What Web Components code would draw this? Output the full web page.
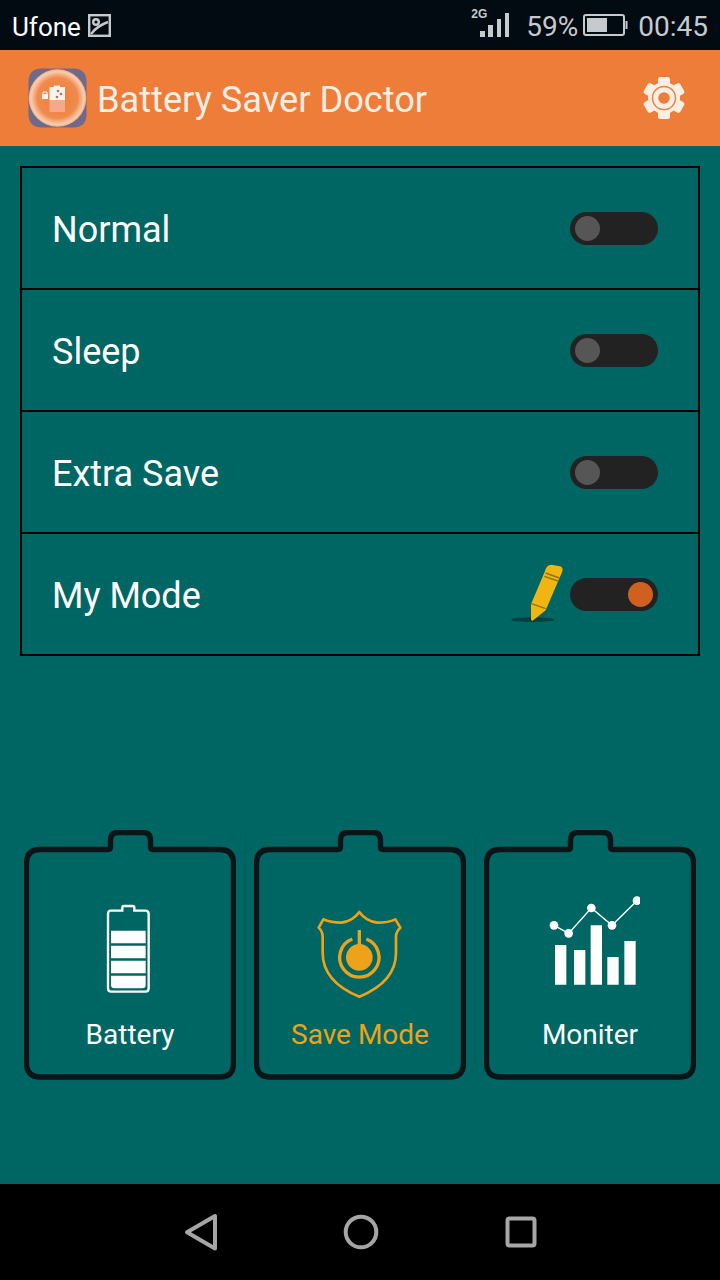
<!DOCTYPE html>
<html>
<head>
<meta charset="utf-8">
<title>Battery Saver Doctor</title>
<style>
  html, body { margin: 0; padding: 0; }
  body { width: 720px; height: 1280px; overflow: hidden; font-family: Roboto, "Liberation Sans", sans-serif; background: #006663; }
  #page { display: flex; flex-direction: column; height: 1280px; }
  main-area { flex: 1; }
</style>
</head>
<body>
<div id="page">
  <status-bar></status-bar>
  <app-bar></app-bar>
  <main-area>
    <mode-list>
      <mode-row label="Normal"></mode-row>
      <mode-row label="Sleep"></mode-row>
      <mode-row label="Extra Save"></mode-row>
      <mode-row label="My Mode" on>
        <svg slot="extra" width="57" height="62" viewBox="90 95 171 186">
          <ellipse cx="158" cy="268" rx="64" ry="7" fill="#013f40"/>
          <path d="M153 222 L195 122 Q200 103 214 103 L240 108 Q252 112 246 126 L197 240 L158 271 Q153 272 153 265 Z" fill="#f1b512"/>
          <path d="M154 220 L197 235 M197 128 L238 143 M193 138 L234 152" stroke="#8f7512" stroke-width="4" fill="none"/>
        </svg>
      </mode-row>
    </mode-list>
    <card-row>
      <tool-card>
        <svg slot="icon" viewBox="210 219 300 321">
          <path d="M302 272 H337 V263 Q337 258 342 258 H368 Q373 258 373 263 V272 H406 Q416 272 416 282 V505 Q416 515 406 515 H304 Q294 515 294 505 V282 Q294 272 302 272 Z" fill="none" stroke="#fff" stroke-width="7"/>
          <path d="M303 332 H407 V370 H303 Z M303 377 H407 V415 H303 Z M303 422 H407 V460 H303 Z M303 467 H407 V495 Q407 505 397 505 H313 Q303 505 303 495 Z" fill="#fff"/>
        </svg>
        Battery
      </tool-card>
      <tool-card active>
        <svg slot="icon" viewBox="210 219 300 321">
          <path d="M358 276 Q378 304 412 308 Q445 308 466 298 L481 323 Q468 335 468 350 V398 Q468 485 358 530 Q248 485 248 398 V350 Q248 335 236 323 L250 298 Q272 308 304 308 Q338 304 358 276 Z" fill="none" stroke="#eda21a" stroke-width="8" stroke-linejoin="round"/>
          <path d="M337 357 A59 59 0 1 0 379 357" fill="none" stroke="#eda21a" stroke-width="10"/>
          <circle cx="358" cy="412" r="40" fill="#eda21a"/>
          <rect x="353" y="330" width="10" height="50" fill="#eda21a"/>
        </svg>
        Save Mode
      </tool-card>
      <tool-card>
        <svg slot="icon" viewBox="210 219 300 321">
          <path d="M255 375 H289 V494 H255 Z M312 390 H346 V494 H312 Z M362 316 H396 V494 H362 Z M412 411 H446 V494 H412 Z M463 363 H497 V494 H463 Z" fill="#fff"/>
          <path d="M252 316 L296 340 L364 264 L426 316 L501 242" fill="none" stroke="#fff" stroke-width="4"/>
          <circle cx="252" cy="316" r="13" fill="#fff"/>
          <circle cx="296" cy="340" r="13" fill="#fff"/>
          <circle cx="364" cy="264" r="13" fill="#fff"/>
          <circle cx="426" cy="316" r="13" fill="#fff"/>
          <circle cx="501" cy="242" r="13" fill="#fff"/>
        </svg>
        Moniter
      </tool-card>
    </card-row>
  </main-area>
  <nav-bar></nav-bar>
</div>

<script>
// top phone status bar
class StatusBar extends HTMLElement {
  constructor() {
    super();
    this.attachShadow({ mode: "open" });
    this.shadowRoot.innerHTML = `
      <style>
        :host { display: flex; align-items: center; height: 50px; background: #020a12; color: #c5cace; font-size: 28px; padding: 0 12px; box-sizing: border-box; }
        .txt { padding-top: 3px; }
        .carrier { color: #fff; font-size: 26px; }
        .pic { margin-left: 7px; }
        .spacer { flex: 1; }
        .signal { position: relative; width: 40px; height: 50px; margin-right: 15px; }
        .signal b { position: absolute; left: 0; top: 7px; font: bold 12px "Liberation Sans", sans-serif; }
        .signal svg { position: absolute; left: 0; top: 0; }
        .batt { margin: 0 10px 0 5px; }
      </style>
      <span class="txt carrier">Ufone</span>
      <svg class="pic" width="23" height="23" viewBox="0 0 23 23" fill="none" stroke="#c5cace" stroke-width="2.4">
        <rect x="1.2" y="1.2" width="20.6" height="20.6"/>
        <circle cx="8" cy="8" r="2.8"/>
        <path d="M3 20 Q9 12 20 8"/>
      </svg>
      <span class="spacer"></span>
      <span class="signal">
        <b>2G</b>
        <svg width="40" height="50" fill="#c5cace"><path d="M9 31 h5 v6 h-5 z M17 25 h5 v12 h-5 z M26 19 h4 v18 h-4 z M34 13 h4 v24 h-4 z"/></svg>
      </span>
      <span class="txt">59%</span>
      <svg class="batt" width="45" height="24" viewBox="0 0 45 24" fill="none">
        <rect x="1" y="2" width="40" height="20" rx="2" stroke="#c5cace" stroke-width="2"/>
        <rect x="4" y="5" width="20" height="14" fill="#c5cace"/>
        <path d="M42.5 8 h2 v8 h-2 z" fill="#c5cace"/>
      </svg>
      <span class="txt">00:45</span>
    `;
  }
}

// orange toolbar with app logo and settings gear
class AppBar extends HTMLElement {
  constructor() {
    super();
    this.attachShadow({ mode: "open" });
    const teeth = [0, 60, 120, 180, 240, 300]
      .map((a) => `<rect x="-6" y="-21" width="12" height="10" rx="2.5" transform="rotate(${a})"/>`)
      .join("");
    this.shadowRoot.innerHTML = `
      <style>
        :host { display: flex; align-items: center; height: 96px; background: #ee7d3a; color: #fdeee4; padding: 0 34px 0 28px; box-sizing: border-box; font-size: 36.2px; }
        .title { flex: 1; margin-left: 10px; padding-top: 2px; }
      </style>
      <svg width="59" height="60" viewBox="0 0 59 60">
        <defs>
          <radialGradient id="glow" cx="50%" cy="50%" r="50%">
            <stop offset="0" stop-color="#ee7d3a"/>
            <stop offset=".7" stop-color="#f08a4c"/>
            <stop offset=".92" stop-color="#f9cdb0"/>
            <stop offset="1" stop-color="#f4ad84"/>
          </radialGradient>
        </defs>
        <path d="M14 0.5 H45 Q58.5 0.5 58.5 14 V46 Q58.5 59.5 45 59.5 H14 Q0.5 59.5 0.5 46 V14 Q0.5 0.5 14 0.5 Z" fill="#6f6a8c"/>
        <circle cx="29.5" cy="30" r="28.8" fill="url(#glow)"/>
        <rect x="21.5" y="19" width="15.5" height="13" fill="#fdf3ec"/>
        <rect x="26" y="17.5" width="6" height="2" fill="#fdf3ec"/>
        <rect x="21.5" y="32" width="15.5" height="12" fill="#f6a98a"/>
        <circle cx="30" cy="23" r="1.3" fill="#c26a6a"/><circle cx="33" cy="26" r="1.3" fill="#c26a6a"/><circle cx="29" cy="29" r="1.3" fill="#c26a6a"/>
        <rect x="14" y="26" width="6" height="5" fill="#fdf3ec"/>
        <path d="M15 26 v-2 h4 v2" stroke="#fdf3ec" fill="none"/>
      </svg>
      <span class="title">Battery Saver Doctor</span>
      <svg width="44" height="46" viewBox="-22 -23 44 46">
        <g fill="#fdeee4">${teeth}<circle r="16"/></g>
        <circle r="11.5" fill="none" stroke="#ee7d3a" stroke-width="1.4"/>
        <circle r="5.8" fill="#ee7d3a"/>
      </svg>
    `;
  }
}

class MainArea extends HTMLElement {
  constructor() {
    super();
    this.attachShadow({ mode: "open" });
    this.shadowRoot.innerHTML = `
      <style>:host { display: block; background: #006663; padding: 20px 20px 0; box-sizing: border-box; }</style>
      <slot></slot>
    `;
  }
}

class ModeList extends HTMLElement {
  constructor() {
    super();
    this.attachShadow({ mode: "open" });
    this.shadowRoot.innerHTML = `
      <style>:host { display: block; border: 2px solid #000; }</style>
      <slot></slot>
    `;
  }
}

class ToggleSwitch extends HTMLElement {
  constructor() {
    super();
    this.attachShadow({ mode: "open" });
    this.shadowRoot.innerHTML = `
      <style>
        :host { display: flex; align-items: center; box-sizing: border-box; width: 88px; height: 33px; padding: 0 5.5px 0 5px; border-radius: 17px; background: #222; }
        :host([on]) { justify-content: flex-end; }
        i { width: 25px; height: 25px; border-radius: 50%; background: #565656; }
        :host([on]) i { background: #d0601f; }
      </style>
      <i></i>
    `;
  }
}

class ModeRow extends HTMLElement {
  constructor() {
    super();
    this.attachShadow({ mode: "open" });
    const label = this.getAttribute("label");
    const on = this.hasAttribute("on") ? "on" : "";
    this.shadowRoot.innerHTML = `
      <style>
        :host { display: flex; align-items: center; height: 122px; box-sizing: border-box; border-bottom: 2px solid #000; padding: 0 40px 0 30px; color: #fff; font-size: 36px; }
        :host(:last-child) { height: 120px; border-bottom: 0; }
        .label { flex: 1; padding-top: 4px; }
        ::slotted(svg) { display: block; margin: 0 3px 3px 0; }
      </style>
      <span class="label">${label}</span>
      <slot name="extra"></slot>
      <toggle-switch ${on}></toggle-switch>
    `;
  }
}

class CardRow extends HTMLElement {
  constructor() {
    super();
    this.attachShadow({ mode: "open" });
    this.shadowRoot.innerHTML = `
      <style>:host { display: grid; grid-template-columns: repeat(3, 212px); column-gap: 18px; margin: 174px 0 0 4px; }</style>
      <slot></slot>
    `;
  }
}

// battery shaped tile: outline sits behind the icon and label
class ToolCard extends HTMLElement {
  constructor() {
    super();
    this.attachShadow({ mode: "open" });
    this.shadowRoot.innerHTML = `
      <style>
        :host { display: flex; flex-direction: column; align-items: center; position: relative; box-sizing: border-box; width: 212px; height: 250px; padding-top: 63px; color: #fff; font-size: 28px; }
        :host([active]) { color: #eda21a; }
        :host(:not(:first-child))::before { content: ""; position: absolute; left: -9px; top: 6px; bottom: 10px; width: 1px; background: rgba(0, 0, 0, .07); }
        .outline { position: absolute; left: 0; top: 0; }
        ::slotted(svg) { display: block; width: 100px; height: 107px; }
        .label { margin-top: 19px; line-height: 32px; position: relative; }
      </style>
      <svg class="outline" width="212" height="250" fill="none" stroke="#0b1416" stroke-width="5.4">
        <path d="M16.5 19.5 H84 Q86.5 19.5 86.5 17 V10 Q86.5 2.5 94 2.5 H119 Q126.5 2.5 126.5 10 V17 Q126.5 19.5 129 19.5 H195.5 Q209.5 19.5 209.5 33.5 V233 Q209.5 247 195.5 247 H16.5 Q2.5 247 2.5 233 V33.5 Q2.5 19.5 16.5 19.5 Z"/>
      </svg>
      <slot name="icon"></slot>
      <span class="label"><slot></slot></span>
    `;
  }
}

class NavBar extends HTMLElement {
  constructor() {
    super();
    this.attachShadow({ mode: "open" });
    this.shadowRoot.innerHTML = `
      <style>
        :host { display: flex; justify-content: center; align-items: center; gap: 120px; height: 96px; background: #000; padding: 0 0 1px 2px; box-sizing: border-box; }
        svg { display: block; }
      </style>
      <svg width="40" height="40" viewBox="0 0 40 40" fill="none" stroke="#a6a6a6" stroke-width="4" stroke-linejoin="round">
        <path d="M6 20.2 L34 4 V36.5 Z"/>
      </svg>
      <svg width="40" height="40" viewBox="0 0 40 40" fill="none" stroke="#a6a6a6" stroke-width="4">
        <circle cx="20" cy="20" r="15.3"/>
      </svg>
      <svg width="40" height="40" viewBox="0 0 40 40" fill="none" stroke="#a6a6a6" stroke-width="4">
        <rect x="6.5" y="6.5" width="27" height="27" rx="2"/>
      </svg>
    `;
  }
}

customElements.define("status-bar", StatusBar);
customElements.define("app-bar", AppBar);
customElements.define("main-area", MainArea);
customElements.define("mode-list", ModeList);
customElements.define("toggle-switch", ToggleSwitch);
customElements.define("mode-row", ModeRow);
customElements.define("card-row", CardRow);
customElements.define("tool-card", ToolCard);
customElements.define("nav-bar", NavBar);
</script>
</body>
</html>
